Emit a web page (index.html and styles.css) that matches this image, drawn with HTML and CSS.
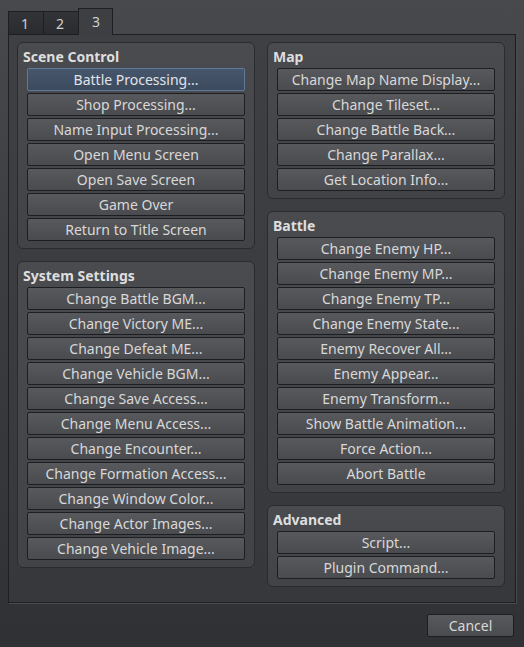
FILE: index.html
```html
<!DOCTYPE html>
<html>
<head>
<meta charset="utf-8">
<link rel="stylesheet" href="styles.css">
</head>
<body>
<div class="tabs">
  <div class="tab">1</div>
  <div class="tab">2</div>
  <div class="tab active">3</div>
</div>
<div class="panel">
  <div class="col">
    <div class="box">
      <div class="title">Scene Control</div>
      <div class="btn focus">Battle Processing...</div>
      <div class="btn">Shop Processing...</div>
      <div class="btn">Name Input Processing...</div>
      <div class="btn">Open Menu Screen</div>
      <div class="btn">Open Save Screen</div>
      <div class="btn">Game Over</div>
      <div class="btn">Return to Title Screen</div>
    </div>
    <div class="box">
      <div class="title">System Settings</div>
      <div class="btn">Change Battle BGM...</div>
      <div class="btn">Change Victory ME...</div>
      <div class="btn">Change Defeat ME...</div>
      <div class="btn">Change Vehicle BGM...</div>
      <div class="btn">Change Save Access...</div>
      <div class="btn">Change Menu Access...</div>
      <div class="btn">Change Encounter...</div>
      <div class="btn">Change Formation Access...</div>
      <div class="btn">Change Window Color...</div>
      <div class="btn">Change Actor Images...</div>
      <div class="btn">Change Vehicle Image...</div>
    </div>
  </div>
  <div class="col">
    <div class="box">
      <div class="title">Map</div>
      <div class="btn">Change Map Name Display...</div>
      <div class="btn">Change Tileset...</div>
      <div class="btn">Change Battle Back...</div>
      <div class="btn">Change Parallax...</div>
      <div class="btn">Get Location Info...</div>
    </div>
    <div class="box">
      <div class="title">Battle</div>
      <div class="btn">Change Enemy HP...</div>
      <div class="btn">Change Enemy MP...</div>
      <div class="btn">Change Enemy TP...</div>
      <div class="btn">Change Enemy State...</div>
      <div class="btn">Enemy Recover All...</div>
      <div class="btn">Enemy Appear...</div>
      <div class="btn">Enemy Transform...</div>
      <div class="btn">Show Battle Animation...</div>
      <div class="btn">Force Action...</div>
      <div class="btn">Abort Battle</div>
    </div>
    <div class="box">
      <div class="title">Advanced</div>
      <div class="btn">Script...</div>
      <div class="btn">Plugin Command...</div>
    </div>
  </div>
</div>
<div class="footer">
  <div class="btn cancel">Cancel</div>
</div>
</body>
</html>
```
FILE: styles.css
```css
html, body {
  margin: 0;
  padding: 0;
}
body {
  width: 524px;
  height: 647px;
  overflow: hidden;
  background: linear-gradient(to bottom, #47494d 0px, #3b3c40 300px, #303135 647px);
  font-family: "Noto Sans", "Open Sans", sans-serif;
  font-size: 14px;
  color: #d6d6d6;
}
.tabs {
  display: flex;
  align-items: flex-end;
  height: 35px;
  padding-left: 8px;
  position: relative;
  z-index: 1;
}
.tab {
  width: 35px;
  height: 23px;
  box-sizing: border-box;
  border: 1px solid #1e1f22;
  border-bottom: none;
  border-right: none;
  background: linear-gradient(to bottom, #333437, #2a2b2e);
  color: #d0d0d0;
  font-size: 14px;
  line-height: 23px;
  padding-left: 12px;
  margin-bottom: 1px;
}
.tab.active {
  width: 35px;
  height: 27px;
  border-right: 1px solid #1e1f22;
  background: #3e3f43;
  margin-bottom: 0;
  line-height: 26px;
  padding-left: 13px;
}
.panel {
  margin: -1px 8px 0 8px;
  height: 569px;
  box-sizing: border-box;
  border: 1px solid #1e1f22;
  border-right-color: #1b1c1f;
  box-shadow: 1px 1px 0 #4a4b4f;
  background: linear-gradient(to bottom, #3f4044, #37383c);
  display: flex;
  gap: 12px;
  padding: 7px 9px 0 8px;
}
.col {
  width: 238px;
  display: flex;
  flex-direction: column;
  gap: 12px;
}
.box {
  border: 1px solid #2a2b2e;
  border-radius: 6px;
  background: linear-gradient(to bottom, #4a4b4f, #424347);
  padding: 0 9px 7px 9px;
  display: flex;
  flex-direction: column;
  gap: 2px;
}
.title {
  height: 23px;
  line-height: 27px;
  font-weight: bold;
  font-size: 14px;
  color: #dedede;
  margin-left: -4px;
}
.btn {
  width: 218px;
  height: 23px;
  box-sizing: border-box;
  border: 1px solid #1d1e21;
  border-radius: 2px;
  background: linear-gradient(to bottom, #58595d, #4a4b4f);
  text-align: center;
  line-height: 22px;
  color: #d8d8d8;
  white-space: nowrap;
}
.btn.focus {
  border-color: #5e7a98;
  background: linear-gradient(to bottom, #46566c, #3c4a5d);
  color: #e0e4ea;
}
.footer {
  display: flex;
  justify-content: flex-end;
  padding: 11px 10px 0 0;
}
.btn.cancel {
  width: 87px;
  font-size: 14px;
}
```
